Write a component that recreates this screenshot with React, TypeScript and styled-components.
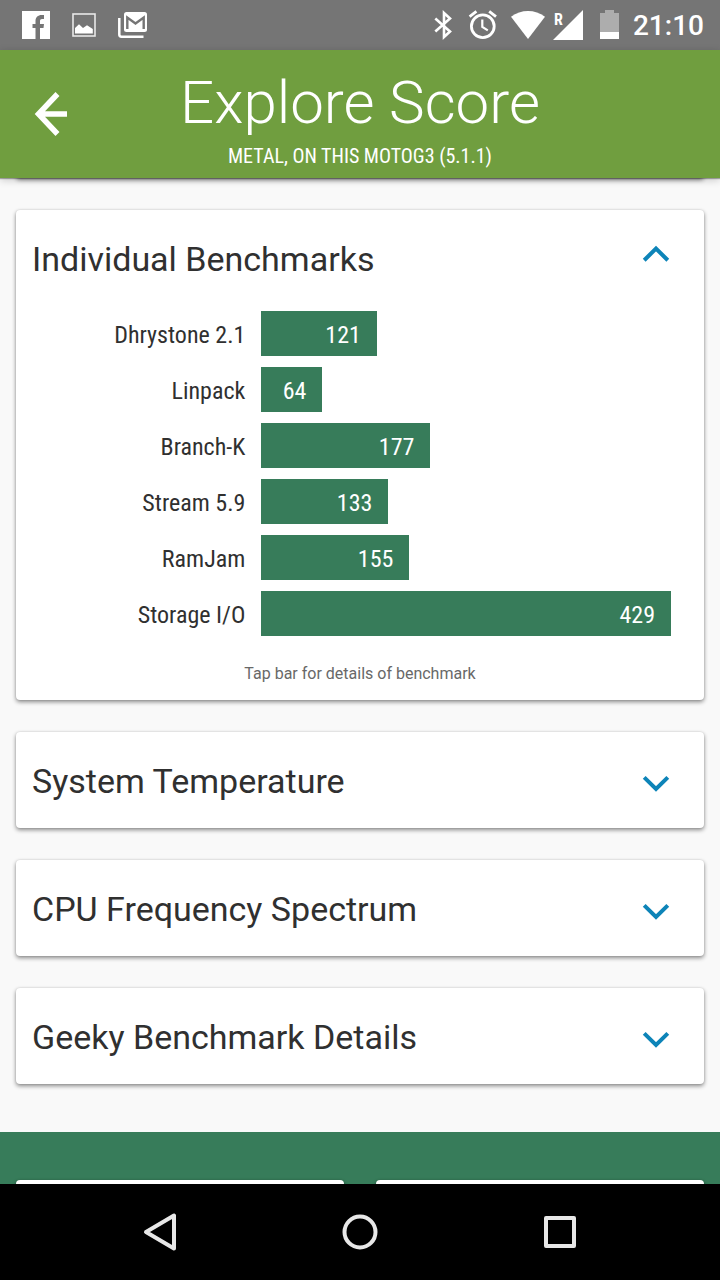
import React, { useState } from "react";
import styled, { createGlobalStyle } from "styled-components";

const GlobalStyle = createGlobalStyle`
  *, *::before, *::after { box-sizing: border-box; }
  body {
    margin: 0;
    background: #f9f9f9;
    color: #303030;
    font-family: Roboto, "Liberation Sans", sans-serif;
  }
  button {
    margin: 0;
    padding: 0;
    border: 0;
    background: none;
    color: inherit;
    font: inherit;
    cursor: pointer;
  }
  h1, h2, p, ul { margin: 0; padding: 0; font-weight: 400; }
  svg { display: block; flex: none; }
`;

const condensed = `"Roboto Condensed", Roboto, "Liberation Sans Narrow", sans-serif`;
const barGreen = "#377c5a";
const cardShadow = "0 2px 4px rgba(0, 0, 0, 0.45), 0 0 2px rgba(0, 0, 0, 0.12)";

const Screen = styled.div`
  display: flex;
  flex-direction: column;
  height: 100vh;
  overflow: hidden;
`;

const StatusBar = styled.div`
  display: flex;
  flex: none;
  align-items: center;
  justify-content: space-between;
  height: 50px;
  padding: 0 16px 0 22px;
  background: #757575;
  color: #fff;
`;

const StatusGroup = styled.div<{ $gap: number }>`
  display: flex;
  align-items: center;
  gap: ${(p) => p.$gap}px;
`;

const Clock = styled.time`
  padding-top: 2px;
  font-size: 28px;
  font-weight: 500;
  line-height: 34px;
`;

const AppBar = styled.header`
  position: relative;
  z-index: 1;
  display: grid;
  flex: none;
  grid-template-columns: 1fr auto 1fr;
  align-items: center;
  height: 128px;
  padding: 0 34px;
  background: #709e3f;
  color: #fff;
  box-shadow: 0 1px 1px rgba(0, 0, 0, 0.3), 0 2px 8px rgba(0, 0, 0, 0.2);
`;

const BackButton = styled.button`
  justify-self: start;
`;

const Titles = styled.div`
  padding-top: 12px;
  text-align: center;
`;

const Title = styled.h1`
  font-size: 60px;
  font-weight: 300;
  line-height: 72px;
`;

const Subtitle = styled.p`
  font-family: ${condensed};
  font-size: 20px;
  line-height: 34px;
  text-transform: uppercase;
`;

const Content = styled.main`
  flex: 1;
  min-height: 0;
  overflow: hidden;
`;

const CardList = styled.div`
  display: flex;
  flex-direction: column;
  gap: 32px;
  padding: 0 16px 48px;
`;

const Card = styled.section`
  border-radius: 4px;
  background: #fff;
  box-shadow: ${cardShadow};
`;

const ScrolledCard = styled(Card)`
  height: 16px;
  margin-top: -16px;
`;

const CardHeader = styled.button`
  display: flex;
  align-items: center;
  justify-content: space-between;
  width: 100%;
  height: 96px;
  padding: 0 32px 0 16px;
  text-align: left;
`;

const CardTitle = styled.h2`
  padding-top: 2px;
  font-size: 34px;
  line-height: 40px;
`;

const Chart = styled.ul`
  display: flex;
  flex-direction: column;
  gap: 11px;
  padding: 5px 16px 0;
  list-style: none;
`;

const ChartRow = styled.li`
  display: grid;
  grid-template-columns: minmax(0, 1fr) minmax(0, 2fr);
  align-items: center;
  gap: 16px;
  font-family: ${condensed};
  font-size: 24px;
  line-height: 41px;
`;

const BarLabel = styled.span`
  padding-top: 4px;
  text-align: right;
`;

const Track = styled.div`
  height: 45px;
  padding-right: 17px;
`;

const Bar = styled.button`
  display: block;
  height: 100%;
  padding: 4px 16px 0 0;
  background: ${barGreen};
  color: #fff;
  text-align: right;
`;

const Hint = styled.p`
  padding: 27px 0 15px;
  color: #686868;
  font-size: 16px;
  line-height: 22px;
  text-align: center;
`;

const Footer = styled.section`
  display: grid;
  grid-template-columns: 1fr 1fr;
  gap: 32px;
  padding: 48px 16px;
  background: ${barGreen};
`;

const FooterCard = styled(Card)`
  height: 96px;
`;

const NavBar = styled.nav`
  display: flex;
  flex: none;
  height: 96px;
  padding: 0 calc(100% / 12);
  background: #000;
`;

const NavButton = styled.button`
  display: flex;
  flex: 1;
  align-items: center;
  justify-content: center;
`;

const benchmarks = [
  { name: "Dhrystone 2.1", score: 121 },
  { name: "Linpack", score: 64 },
  { name: "Branch-K", score: 177 },
  { name: "Stream 5.9", score: 133 },
  { name: "RamJam", score: 155 },
  { name: "Storage I/O", score: 429 },
];
const topScore = Math.max(...benchmarks.map((b) => b.score));

const FacebookIcon = () => (
  <svg width="28" height="28" viewBox="0 0 28 28" aria-hidden="true">
    <path fill="#fff" d="M0 0H28V28H18V17H21.5L22 13H18V10C18 8.700 18.600 8 20 8H22V4H19.500C16 4 13.500 6.200 13.500 10V13H10.500V17H13.500V28H0Z" />
  </svg>
);

const PictureIcon = () => (
  <svg width="24" height="24" viewBox="0 0 24 24" aria-hidden="true">
    <rect x="1" y="1" width="22" height="22" fill="none" stroke="#e8e8e8" strokeWidth="1.600" />
    <path fill="#fff" d="M3 15L7 11.300L11 15L15 12.300L20.800 16V20.500H3Z" />
  </svg>
);

const MailIcon = () => (
  <svg width="29" height="26" viewBox="0 0 29 26" aria-hidden="true">
    <rect x="6" width="23" height="20" rx="2.500" fill="#fff" />
    <path fill="none" stroke="#757575" strokeWidth="2.400" d="M9.300 17V5.500L17.500 11.500L25.700 5.500V17" />
    <path fill="none" stroke="#fff" strokeWidth="2.500" d="M1.300 6V22.500Q1.300 24.700 3.500 24.700H25.500" />
  </svg>
);

const BluetoothIcon = () => (
  <svg width="29" height="30" viewBox="0 0 29 30" aria-hidden="true">
    <path fill="none" stroke="#fff" strokeWidth="2.600" d="M5.300 8.500L20 21.500L14 27V3L20 8.500L5.300 21.500" />
  </svg>
);

const AlarmIcon = () => (
  <svg width="36" height="30" viewBox="0 0 36 30" aria-hidden="true">
    <g fill="none" stroke="#fff">
      <circle cx="15.800" cy="16.300" r="11.400" strokeWidth="2.800" />
      <path strokeWidth="2.800" d="M2.600 6.600L9.400 1.300M29 6.600L22.200 1.300" />
      <path strokeWidth="2.200" d="M15.300 9.500V17L20.800 20.400" />
    </g>
  </svg>
);

const WifiIcon = () => (
  <svg width="34" height="30" viewBox="0 0 34 30" aria-hidden="true">
    <path fill="#fff" d="M0 6.700C10 -0.900 24 -0.900 34 6.700L17 29Z" />
  </svg>
);

const SignalIcon = () => (
  <svg width="31" height="30" viewBox="0 0 31 30" aria-hidden="true">
    <path fill="#fff" d="M0 30L30 0V30Z" />
    <text x="1" y="15" fill="#fff" fontFamily={condensed} fontSize="16" fontWeight="700">R</text>
  </svg>
);

const BatteryIcon = () => (
  <svg width="33" height="30" viewBox="0 0 33 30" aria-hidden="true">
    <path fill="#adadad" d="M8 3H13V0H22V3H27V22H8Z" />
    <path fill="#fff" d="M8 22H27V29H8Z" />
  </svg>
);

const BackArrow = () => (
  <svg width="34" height="44" viewBox="0 0 34 44" aria-hidden="true">
    <path fill="none" stroke="#fff" strokeWidth="5.500" d="M23.500 2L4.500 22L23.500 42M4.500 22H33" />
  </svg>
);

const Chevron = ({ open }: { open: boolean }) => (
  <svg width="32" height="32" viewBox="0 0 32 32" aria-hidden="true">
    <path
      fill="none"
      stroke="#0d84b8"
      strokeWidth="4"
      d={open ? "M4.200 18.200L16 6.600L27.800 18.200" : "M4.200 13.400L16 25L27.800 13.400"}
    />
  </svg>
);

const NavIcon = ({ children }: { children: React.ReactNode }) => (
  <svg width="40" height="40" viewBox="0 0 40 40" fill="none" stroke="#e8e8e8" strokeWidth="4" strokeLinejoin="round" aria-hidden="true">
    {children}
  </svg>
);

function ExpandableCard({ title, initiallyOpen = false, children }: {
  title: string;
  initiallyOpen?: boolean;
  children?: React.ReactNode;
}) {
  const [open, setOpen] = useState(initiallyOpen);
  return (
    <Card>
      <CardHeader type="button" aria-expanded={open} onClick={() => setOpen(!open)}>
        <CardTitle>{title}</CardTitle>
        <Chevron open={open} />
      </CardHeader>
      {open && children}
    </Card>
  );
}

export default function App() {
  return (
    <>
      <GlobalStyle />
      <Screen>
        <StatusBar>
          <StatusGroup $gap={22}>
            <FacebookIcon />
            <PictureIcon />
            <MailIcon />
          </StatusGroup>
          <StatusGroup $gap={8}>
            <BluetoothIcon />
            <AlarmIcon />
            <WifiIcon />
            <SignalIcon />
            <BatteryIcon />
            <Clock>21:10</Clock>
          </StatusGroup>
        </StatusBar>
        <AppBar>
          <BackButton type="button" aria-label="Back">
            <BackArrow />
          </BackButton>
          <Titles>
            <Title>Explore Score</Title>
            <Subtitle>Metal, on this MotoG3 (5.1.1)</Subtitle>
          </Titles>
        </AppBar>
        <Content>
          <CardList>
            <ScrolledCard />
            <ExpandableCard title="Individual Benchmarks" initiallyOpen>
              <Chart>
                {benchmarks.map((b) => (
                  <ChartRow key={b.name}>
                    <BarLabel id={`label-${b.score}`}>{b.name}</BarLabel>
                    <Track>
                      <Bar
                        type="button"
                        aria-describedby={`label-${b.score}`}
                        style={{ width: `${(b.score / topScore) * 100}%` }}
                      >
                        {b.score}
                      </Bar>
                    </Track>
                  </ChartRow>
                ))}
              </Chart>
              <Hint>Tap bar for details of benchmark</Hint>
            </ExpandableCard>
            <ExpandableCard title="System Temperature" />
            <ExpandableCard title="CPU Frequency Spectrum" />
            <ExpandableCard title="Geeky Benchmark Details" />
          </CardList>
          <Footer>
            <FooterCard />
            <FooterCard />
          </Footer>
        </Content>
        <NavBar>
          <NavButton type="button" aria-label="Back">
            <NavIcon><path d="M6 20L34 3.500V36.500Z" /></NavIcon>
          </NavButton>
          <NavButton type="button" aria-label="Home">
            <NavIcon><circle cx="20" cy="20" r="15.500" /></NavIcon>
          </NavButton>
          <NavButton type="button" aria-label="Recent apps">
            <NavIcon><rect x="6" y="6" width="28" height="28" /></NavIcon>
          </NavButton>
        </NavBar>
      </Screen>
    </>
  );
}
